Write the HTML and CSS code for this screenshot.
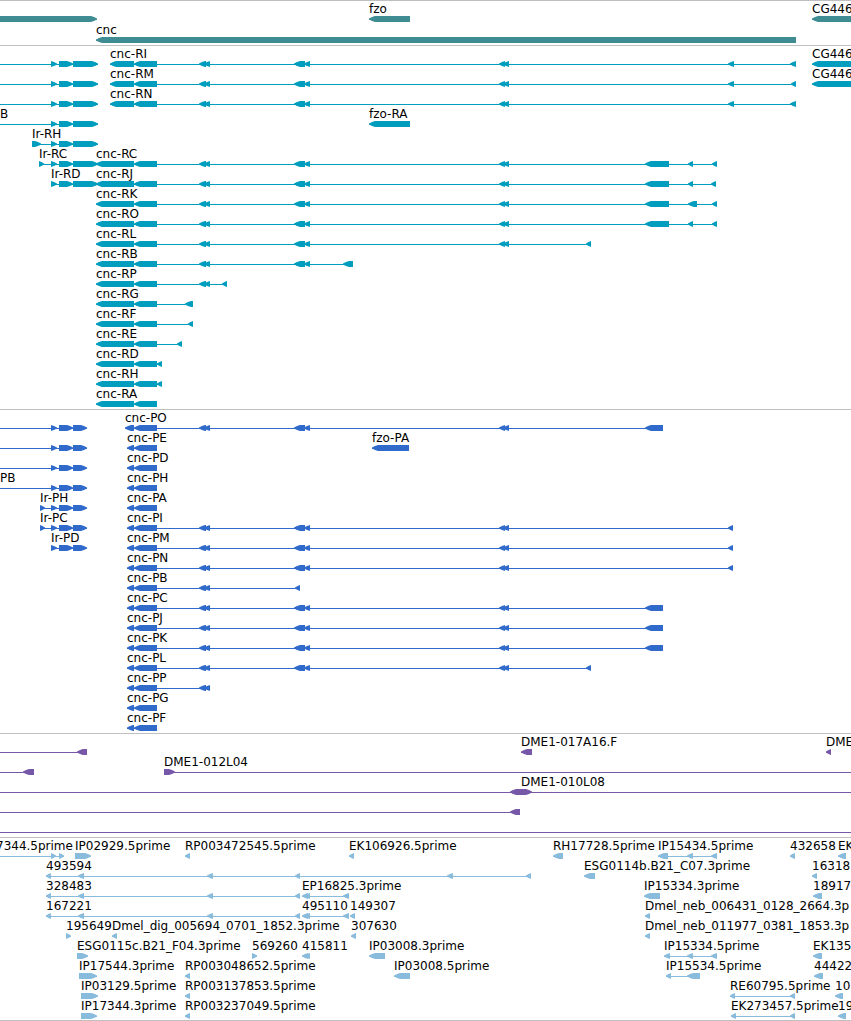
FILE: index.html
```html
<!DOCTYPE html>
<html lang="en">
<head>
<meta charset="utf-8">
<title>Genome tracks</title>
<link rel="stylesheet" href="styles.css">
</head>
<body>
<main class="browser" id="browser"></main>
<script src="tracks.js"></script>
</body>
</html>
```

FILE: styles.css
```css
body {
  margin: 0;
  background: #fff;
  color: #000;
  font-family: "DejaVu Sans", sans-serif;
  font-size: 12px;
}

.browser {
  display: flex;
  flex-direction: column;
  overflow: hidden;
  border-bottom: 1px solid #bfbfbf;
}

.track {
  border-top: 1px solid #bfbfbf;
  padding-bottom: 3px;
}

.gene { color: #408c93; padding-bottom: 2px; }
.transcript { color: #009dbe; }
.protein { color: #306bcb; }
.clone { color: #7758a8; }
.est { color: #89bbdc; padding-bottom: 2px; }

.row {
  position: relative;
  height: 20px;
  padding-top: 15px;
  box-sizing: border-box;
}

.gene .row { height: 21px; }

.glyphs {
  display: block;
  width: 100%;
  height: 6px;
  fill: currentColor;
}

.label {
  position: absolute;
  top: 0;
  line-height: 16px;
  white-space: nowrap;
  color: #000;
}
```

FILE: tracks.js
```js
// A feature is [label, label x, strand, blocks]; blocks are [start, end] pairs.
const OFF_LEFT = [-40, -30];
const OFF_RIGHT = [6000, 6010];

const upstream = [[199, 206], [204, 210]];
const mid = [...upstream, [294, 305], [304, 310]];
const far = [...mid, [499, 505], [503, 509]];
const rna = [[96, 134], [134, 157]];
const pep = [[127, 134], [134, 157]];
const irRna = [[51, 57], [59, 73], [73, 98]];
const irPep = [[51, 57], [59, 73], [73, 87]];

const irRnaLong = (label = "") => [label, 0, "+", [OFF_LEFT, ...irRna]];
const irPepLong = (label = "") => [label, 0, "+", [OFF_LEFT, ...irPep]];
const left = (label, x, ...blocks) => [label, x, "-", blocks];
const right = (label, x, ...blocks) => [label, x, "+", blocks];
const shortRow = [[46, 51], [78, 84], [207, 213], [295, 300]];

const tracks = [
  { kind: "gene", rows: [
    [right("", 0, [-40, 97]), left("fzo", 369, [369, 410]), left("CG446", 812, [812, 6000])],
    [left("cnc", 96, [96, 796])],
  ] },
  { kind: "transcript", rows: [
    [irRnaLong(), left("cnc-RI", 110, [110, 134], [134, 157], ...far, [728, 734], [790, 796]), left("CG446", 812, [812, 6000])],
    [irRnaLong(), left("cnc-RM", 110, [110, 134], [134, 157], ...far, [728, 734], [791, 796]), left("CG446", 812, [812, 6000])],
    [irRnaLong(), left("cnc-RN", 110, [110, 134], [134, 157], ...far, [728, 734], [790, 796])],
    [irRnaLong("B"), left("fzo-RA", 369, [369, 410])],
    [right("Ir-RH", 32, [32, 41], ...irRna)],
    [right("Ir-RC", 39, [39, 44], ...irRna), left("cnc-RC", 96, ...rna, ...far, [645, 669], [688, 693], [712, 717])],
    [right("Ir-RD", 51, ...irRna), left("cnc-RJ", 96, ...rna, ...far, [645, 669], [688, 693], [711, 716])],
    [left("cnc-RK", 96, ...rna, ...far, [645, 669], [688, 697], [712, 717])],
    [left("cnc-RO", 96, ...rna, ...far, [645, 669], [688, 693], [712, 717])],
    [left("cnc-RL", 96, ...rna, ...far, [586, 591])],
    [left("cnc-RB", 96, ...rna, ...mid, [343, 353])],
    [left("cnc-RP", 96, ...rna, ...upstream, [222, 227])],
    [left("cnc-RG", 96, ...rna, [185, 193])],
    [left("cnc-RF", 96, ...rna, [188, 193])],
    [left("cnc-RE", 96, ...rna, [177, 182])],
    [left("cnc-RD", 96, ...rna, [157, 162])],
    [left("cnc-RH", 96, ...rna, [157, 162])],
    [left("cnc-RA", 96, ...rna)],
  ] },
  { kind: "protein", rows: [
    [irPepLong(), left("cnc-PO", 125, [125, 134], [134, 157], ...far, [645, 663])],
    [irPepLong(), left("cnc-PE", 127, ...pep), left("fzo-PA", 372, [372, 409])],
    [irPepLong(), left("cnc-PD", 127, ...pep)],
    [irPepLong("PB"), left("cnc-PH", 127, ...pep)],
    [right("Ir-PH", 40, [40, 45], ...irPep), left("cnc-PA", 127, ...pep)],
    [right("Ir-PC", 40, [40, 45], ...irPep), left("cnc-PI", 127, ...pep, ...far, [728, 733])],
    [right("Ir-PD", 51, ...irPep), left("cnc-PM", 127, ...pep, ...far, [728, 733])],
    [left("cnc-PN", 127, ...pep, ...far, [728, 733])],
    [left("cnc-PB", 127, ...pep, ...upstream, [295, 300])],
    [left("cnc-PC", 127, ...pep, ...far, [645, 663])],
    [left("cnc-PJ", 127, ...pep, ...far, [645, 663])],
    [left("cnc-PK", 127, ...pep, ...far, [645, 663])],
    [left("cnc-PL", 127, ...pep, ...far, [586, 591])],
    [left("cnc-PP", 127, ...pep, ...upstream)],
    [left("cnc-PG", 127, ...pep)],
    [left("cnc-PF", 127, ...pep)],
  ] },
  { kind: "clone", rows: [
    [left("", 0, OFF_LEFT, [77, 87]), left("DME1-017A16.F", 521, [521, 532]), left("DME", 826, [826, 831])],
    [left("", 0, OFF_LEFT, [23, 34]), right("DME1-012L04", 164, [164, 175], OFF_RIGHT)],
    [left("", 0, OFF_LEFT, [510, 521]), right("DME1-010L08", 521, [521, 532], OFF_RIGHT)],
    [left("", 0, OFF_LEFT, [510, 520])],
    [left("", 0, OFF_LEFT, OFF_RIGHT)],
  ] },
  { kind: "est", rows: [
    [right("7344.5prime", -4, OFF_LEFT, [51, 56], [59, 64]), right("IP02929.5prime", 75, [75, 91]),
      left("RP003472545.5prime", 185, [185, 190]), left("EK106926.5prime", 349, [349, 354]),
      left("RH17728.5prime", 553, [553, 563]), left("IP15434.5prime", 658, [658, 668], [687, 693], [711, 717]),
      left("432658", 790, [790, 795]), left("EK", 838, [838, 846])],
    [left("493594", 46, ...shortRow, [447, 453], [526, 531]), left("ESG0114b.B21_C07.3prime", 584, [584, 595]),
      left("16318", 812, [812, 817])],
    [left("328483", 46, ...shortRow), left("EP16825.3prime", 302, [302, 308], [304, 310], [343, 349]),
      left("IP15334.3prime", 644, [644, 660]), left("18917", 813, [813, 822])],
    [left("167221", 46, ...shortRow), left("495110", 302, [302, 308], [304, 310], [343, 349]),
      left("149307", 350, [350, 355]), left("Dmel_neb_006431_0128_2664.3p", 645, [645, 650])],
    [right("195649", 66, [66, 71]), left("Dmel_dig_005694_0701_1852.3prime", 112, [112, 117]),
      left("307630", 351, [351, 356]), left("Dmel_neb_011977_0381_1853.3p", 645, [645, 650])],
    [right("ESG0115c.B21_F04.3prime", 77, [77, 88]), right("569260", 252, [252, 257]),
      left("415811", 302, [302, 308], [304, 310]), left("IP03008.3prime", 369, [369, 385]),
      left("IP15334.5prime", 664, [664, 670], [687, 693], [711, 717]), left("EK135", 813, [813, 822])],
    [right("IP17544.3prime", 79, [79, 97]), left("RP003048652.5prime", 185, [185, 190]),
      left("IP03008.5prime", 394, [394, 410]), left("IP15534.5prime", 666, [666, 671], [687, 700]),
      left("44422", 814, [814, 823])],
    [right("IP03129.5prime", 81, [81, 98]), left("RP003137853.5prime", 185, [185, 190]),
      left("RE60795.5prime", 730, [730, 735], [790, 795]), left("10", 835, [835, 843])],
    [right("IP17344.3prime", 81, [81, 97]), left("RP003237049.5prime", 185, [185, 190]),
      left("EK273457.5prime", 731, [731, 736], [790, 795]), left("19", 838, [838, 846])],
  ] },
];

const SVG = "http://www.w3.org/2000/svg";

function shape(name, attrs) {
  const el = document.createElementNS(SVG, name);
  for (const key in attrs) el.setAttribute(key, attrs[key]);
  return el;
}

// Arrow heads taper over six pixels, less on blocks that are shorter.
function arrow([start, end], strand) {
  const head = Math.min(6, end - start);
  const [tip, dir, tail] = strand === "-" ? [start, 1, end] : [end, -1, start];
  const neck = tip + dir * head;
  const bend = tip + dir * head / 2;
  const points = [[tip, 2.5], [bend, 1], [neck, 0], [tail, 0], [tail, 6], [neck, 6], [bend, 5], [tip, 3.5]];
  return shape("polygon", { points: points.join(" ") });
}

const browser = document.getElementById("browser");

for (const track of tracks) {
  const section = document.createElement("section");
  section.className = "track " + track.kind;
  for (const features of track.rows) {
    const row = document.createElement("div");
    row.className = "row";
    const svg = shape("svg", { class: "glyphs", "aria-hidden": "true" });
    for (const [label, x, strand, blocks] of features) {
      const first = blocks[0][0];
      const last = blocks[blocks.length - 1][1];
      svg.append(shape("rect", { x: first, y: 3, width: last - first, height: 1 }));
      for (const block of blocks) svg.append(arrow(block, strand));
      if (label) {
        const text = document.createElement("span");
        text.className = "label";
        text.style.left = x + "px";
        text.textContent = label;
        row.append(text);
      }
    }
    row.append(svg);
    section.append(row);
  }
  browser.append(section);
}
```
